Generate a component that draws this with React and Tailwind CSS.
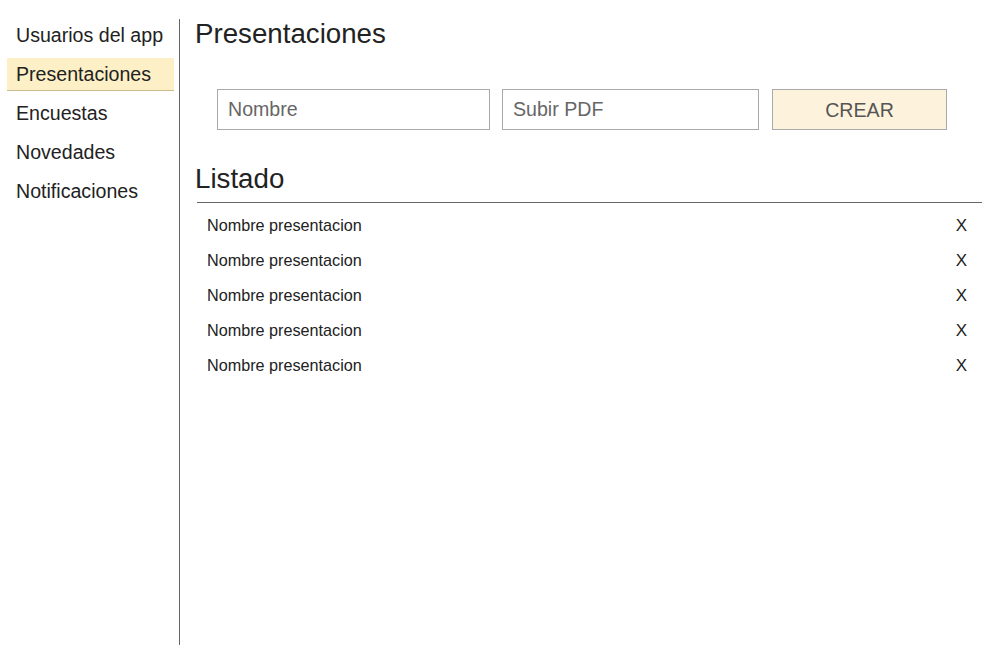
const menu = ["Usuarios del app", "Presentaciones", "Encuestas", "Novedades", "Notificaciones"];
const rows = [1, 2, 3, 4, 5];

export default function App() {
  return (
    <div className="flex w-[1000px] h-[665px] bg-white text-[#222] font-['Liberation_Sans',Arial,sans-serif]">
      <div className="w-[180px] shrink-0 mt-[19px] h-[626px] border-r border-[#666] pl-[7px] pr-[5px]">
        <ul className="flex flex-col gap-[6px]">
          {menu.map((m) => (
            <li
              key={m}
              className={
                "h-[33px] flex items-center pl-[9px] pt-[2px] text-[19.6px] border-b " +
                (m === "Presentaciones" ? "bg-[#fdf0c6] border-[#cbbb8d]" : "border-transparent")
              }
            >
              {m}
            </li>
          ))}
        </ul>
      </div>
      <div className="flex-1 pt-[17px] pl-[15px]">
        <h1 className="text-[27.7px] leading-[34px]">Presentaciones</h1>
        <div className="flex mt-[38px] ml-[22px]">
          <input
            placeholder="Nombre"
            className="w-[273px] h-[41px] border border-[#a9a9a9] px-[10px] text-[19.6px] placeholder:text-[#666] outline-none"
          />
          <input
            placeholder="Subir PDF"
            className="w-[257px] h-[41px] ml-[12px] border border-[#a9a9a9] px-[10px] text-[19.6px] placeholder:text-[#666] outline-none"
          />
          <button className="w-[175px] h-[41px] ml-[13px] pt-[2px] border border-[#a9a9a9] bg-[#fdf3dd] text-[19.6px] text-[#555]">
            CREAR
          </button>
        </div>
        <h2 className="text-[27.7px] leading-[34px] mt-[32px]">Listado</h2>
        <div className="ml-[2px] w-[785px] mt-[6px] border-t border-[#666] pt-[5px]">
          {rows.map((r) => (
            <div key={r} className="h-[35px] flex items-center justify-between pl-[10px] pr-[15px] text-[16.2px]">
              <span>Nombre presentacion</span>
              <span className="text-[17px]">X</span>
            </div>
          ))}
        </div>
      </div>
    </div>
  );
}
